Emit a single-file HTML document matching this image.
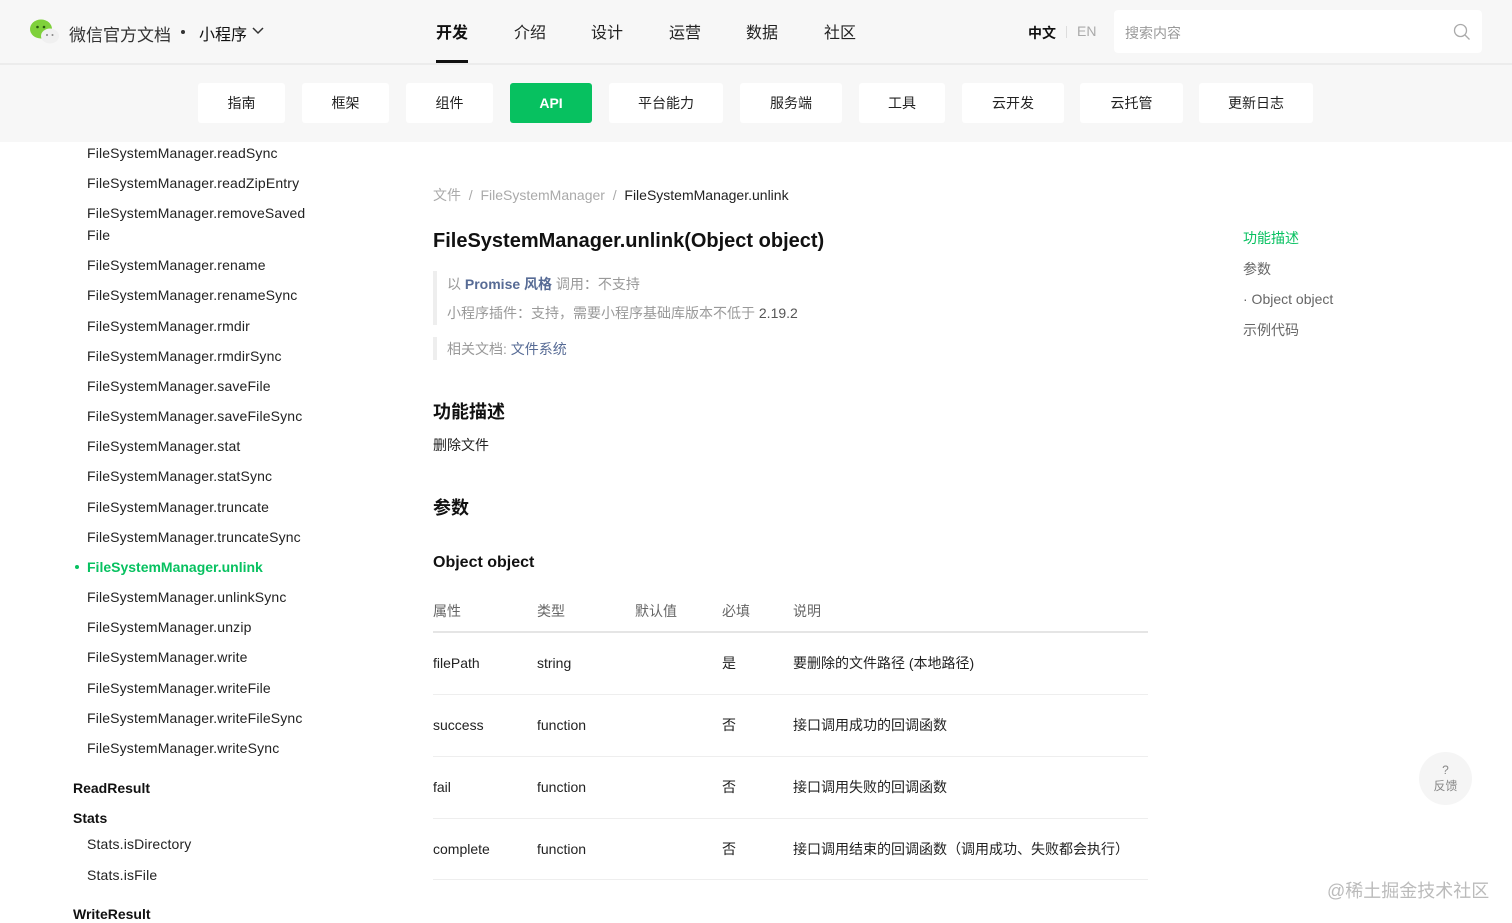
<!DOCTYPE html>
<html><head><meta charset="utf-8"><style>
*{margin:0;padding:0;box-sizing:border-box}
body{width:1512px;height:923px;overflow:hidden;background:#fff;font-family:"Liberation Sans","Noto Sans CJK SC",sans-serif;color:#1a1a1a;position:relative}
.a{position:absolute;white-space:nowrap}
.hd{position:absolute;left:0;top:0;width:1512px;height:142px;background:#f7f7f7}
.hl{position:absolute;left:0;top:63px;width:1512px;height:2px;background:#ececec}
.nb{position:absolute;top:83px;height:40px;background:#fff;border-radius:3px;font-size:14px;line-height:40px;text-align:center;color:#222}
.tn{position:absolute;top:19px;font-size:16px;color:#222;transform:translateX(-50%)}
.sb{position:absolute;left:87px;font-size:14px;color:#222;line-height:20px;transform:translateY(-50%);letter-spacing:0.15px}
.sh{position:absolute;left:73px;font-size:14px;font-weight:bold;color:#111;transform:translateY(-50%)}
.td{position:absolute;font-size:14px;color:#222;transform:translateY(-50%)}
.th{color:#666}
.ln{position:absolute;left:433px;width:715px;height:1px;background:#eee}
.toc{position:absolute;left:1243px;font-size:14px;color:#666;transform:translateY(-50%)}
</style></head><body>
<div class="hd"></div><div class="hl"></div>
<svg class="a" style="left:29px;top:18px" width="32" height="28" viewBox="0 0 32 28"><ellipse cx="12" cy="11" rx="11" ry="9.5" fill="#7fd13b"/><circle cx="8.5" cy="9" r="1.3" fill="#2a5a10"/><circle cx="15" cy="9" r="1.3" fill="#2a5a10"/><ellipse cx="21" cy="18" rx="9" ry="7.5" fill="#f0f0f0"/><circle cx="18" cy="17" r="1" fill="#888"/><circle cx="23.5" cy="17" r="1" fill="#888"/></svg>
<div class="a" style="left:69px;top:21px;font-size:17px;color:#333">微信官方文档</div>
<div class="a" style="left:181px;top:23px;width:4px;height:4px;border-radius:2px;background:#333;top:30px"></div>
<div class="a" style="left:199px;top:21px;font-size:16px;color:#111">小程序</div>
<svg class="a" style="left:252px;top:26px" width="12" height="10"><path d="M1 2l5 5 5-5" stroke="#333" stroke-width="1.5" fill="none"/></svg>
<div class="tn" style="left:452px;font-weight:bold;color:#111">开发</div>
<div class="a" style="left:436px;top:60px;width:32px;height:3px;background:#111"></div>
<div class="tn" style="left:530px">介绍</div><div class="tn" style="left:607px">设计</div><div class="tn" style="left:685px">运营</div><div class="tn" style="left:762px">数据</div><div class="tn" style="left:840px">社区</div>
<div class="a" style="left:1028px;top:23px;font-size:14px;font-weight:bold;color:#111">中文</div>
<div class="a" style="left:1066px;top:26px;width:1px;height:12px;background:#ddd"></div>
<div class="a" style="left:1077px;top:23px;font-size:14px;color:#aaa">EN</div>
<div class="a" style="left:1114px;top:10px;width:368px;height:43px;background:#fff;border-radius:4px"></div>
<div class="a" style="left:1125px;top:23px;font-size:14px;color:#999">搜索内容</div>
<svg class="a" style="left:1453px;top:23px" width="18" height="18"><circle cx="7.5" cy="7.5" r="6" stroke="#aaa" stroke-width="1.3" fill="none"/><path d="M12 12l4.5 4.5" stroke="#aaa" stroke-width="1.3"/></svg>
<div class="nb" style="left:198px;width:87px">指南</div>
<div class="nb" style="left:302px;width:87px">框架</div>
<div class="nb" style="left:406px;width:87px">组件</div>
<div class="nb" style="left:510px;width:82px;background:#07c160;color:#fff;font-weight:bold">API</div>
<div class="nb" style="left:609px;width:114px">平台能力</div>
<div class="nb" style="left:740px;width:102px">服务端</div>
<div class="nb" style="left:859px;width:86px">工具</div>
<div class="nb" style="left:962px;width:102px">云开发</div>
<div class="nb" style="left:1080px;width:103px">云托管</div>
<div class="nb" style="left:1199px;width:114px">更新日志</div>

<div class="sb" style="top:153px">FileSystemManager.readSync</div>
<div class="sb" style="top:183px">FileSystemManager.readZipEntry</div>
<div class="sb" style="top:224px;line-height:22px">FileSystemManager.removeSaved<br>File</div>
<div class="sb" style="top:265px">FileSystemManager.rename</div>
<div class="sb" style="top:295px">FileSystemManager.renameSync</div>
<div class="sb" style="top:326px">FileSystemManager.rmdir</div>
<div class="sb" style="top:356px">FileSystemManager.rmdirSync</div>
<div class="sb" style="top:386px">FileSystemManager.saveFile</div>
<div class="sb" style="top:416px">FileSystemManager.saveFileSync</div>
<div class="sb" style="top:446px">FileSystemManager.stat</div>
<div class="sb" style="top:476px">FileSystemManager.statSync</div>
<div class="sb" style="top:507px">FileSystemManager.truncate</div>
<div class="sb" style="top:537px">FileSystemManager.truncateSync</div>
<div class="a" style="left:75px;top:565px;width:4px;height:4px;border-radius:2px;background:#07c160"></div>
<div class="sb" style="top:567px;color:#07c160;font-weight:bold;letter-spacing:0">FileSystemManager.unlink</div>
<div class="sb" style="top:597px">FileSystemManager.unlinkSync</div>
<div class="sb" style="top:627px">FileSystemManager.unzip</div>
<div class="sb" style="top:657px">FileSystemManager.write</div>
<div class="sb" style="top:688px">FileSystemManager.writeFile</div>
<div class="sb" style="top:718px">FileSystemManager.writeFileSync</div>
<div class="sb" style="top:748px">FileSystemManager.writeSync</div>
<div class="sh" style="top:788px">ReadResult</div>
<div class="sh" style="top:818px">Stats</div>
<div class="sb" style="top:844px">Stats.isDirectory</div>
<div class="sb" style="top:875px">Stats.isFile</div>
<div class="sh" style="top:914px">WriteResult</div>

<div class="a" style="left:433px;top:185px;font-size:14px;color:#aaa">文件 &nbsp;/&nbsp; FileSystemManager &nbsp;/ <span style="color:#222">&nbsp;FileSystemManager.unlink</span></div>
<div class="a" style="left:433px;top:230px;font-size:20px;font-weight:bold;color:#111">FileSystemManager.unlink(Object object)</div>
<div class="a" style="left:433px;top:271px;width:4px;height:54px;background:#eee"></div>
<div class="a" style="left:447px;top:274px;font-size:14px;color:#999">以 <b style="color:#576b95">Promise 风格</b> 调用：不支持</div>
<div class="a" style="left:447px;top:303px;font-size:14px;color:#999">小程序插件：支持，需要小程序基础库版本不低于 <span style="color:#555">2.19.2</span></div>
<div class="a" style="left:433px;top:337px;width:4px;height:23px;background:#eee"></div>
<div class="a" style="left:447px;top:339px;font-size:14px;color:#999">相关文档: <span style="color:#576b95">文件系统</span></div>
<div class="a" style="left:433px;top:398px;font-size:18px;font-weight:bold;color:#111">功能描述</div>
<div class="a" style="left:433px;top:435px;font-size:14px;color:#222">删除文件</div>
<div class="a" style="left:433px;top:494px;font-size:18px;font-weight:bold;color:#111">参数</div>
<div class="a" style="left:433px;top:554px;font-size:16px;font-weight:bold;color:#111">Object object</div>

<div class="td th" style="left:433px;top:611px">属性</div><div class="td th" style="left:537px;top:611px">类型</div><div class="td th" style="left:635px;top:611px">默认值</div><div class="td th" style="left:722px;top:611px">必填</div><div class="td th" style="left:793px;top:611px">说明</div>
<div class="ln" style="top:631px;height:2px;background:#e5e5e5"></div>
<div class="td" style="left:433px;top:663px">filePath</div><div class="td" style="left:537px;top:663px">string</div><div class="td" style="left:722px;top:663px">是</div><div class="td" style="left:793px;top:663px">要删除的文件路径 (本地路径)</div>
<div class="ln" style="top:694px"></div>
<div class="td" style="left:433px;top:725px">success</div><div class="td" style="left:537px;top:725px">function</div><div class="td" style="left:722px;top:725px">否</div><div class="td" style="left:793px;top:725px">接口调用成功的回调函数</div>
<div class="ln" style="top:756px"></div>
<div class="td" style="left:433px;top:787px">fail</div><div class="td" style="left:537px;top:787px">function</div><div class="td" style="left:722px;top:787px">否</div><div class="td" style="left:793px;top:787px">接口调用失败的回调函数</div>
<div class="ln" style="top:818px"></div>
<div class="td" style="left:433px;top:849px">complete</div><div class="td" style="left:537px;top:849px">function</div><div class="td" style="left:722px;top:849px">否</div><div class="td" style="left:793px;top:849px">接口调用结束的回调函数（调用成功、失败都会执行）</div>
<div class="ln" style="top:879px"></div>

<div class="toc" style="top:238px;color:#07c160">功能描述</div>
<div class="toc" style="top:269px">参数</div>
<div class="toc" style="top:299px">· Object object</div>
<div class="toc" style="top:330px">示例代码</div>

<div class="a" style="left:1419px;top:752px;width:53px;height:53px;border-radius:50%;background:#f5f5f5;text-align:center;color:#888;font-size:12px;line-height:16px;padding-top:10px">?<br>反馈</div>
<div class="a" style="left:1327px;top:877px;font-size:18px;color:#bbb">@稀土掘金技术社区</div>
</body></html>
